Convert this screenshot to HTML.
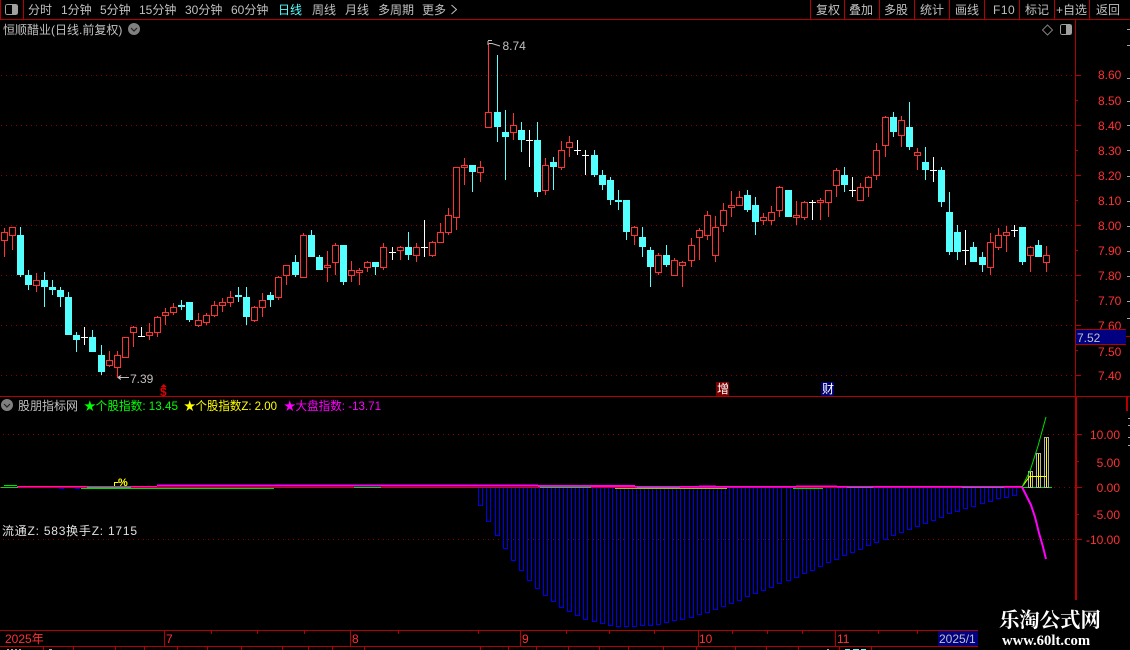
<!DOCTYPE html>
<html lang="zh">
<head>
<meta charset="utf-8">
<title>恒顺醋业</title>
<style>
html,body{margin:0;padding:0;background:#000;width:1130px;height:650px;overflow:hidden}
svg{display:block;position:absolute;left:0;top:0}
text{font-family:"Liberation Sans","WenQuanYi Zen Hei","Noto Sans CJK SC",sans-serif;font-size:12px}
.g{fill:#c0c0c0}
.r{fill:#ff3232}
.end{text-anchor:end}
</style>
</head>
<body>
<svg id="s" width="1130" height="650" viewBox="0 0 1130 650" xmlns="http://www.w3.org/2000/svg" shape-rendering="crispEdges">
<rect width="1130" height="650" fill="#000"/>
<!-- grid -->
<g stroke="#8c0000" stroke-dasharray="1 4" fill="none">
<path d="M1 75.5H1075M1 125.5H1075M1 175.5H1075M1 225.5H1075M1 275.5H1075M1 325.5H1075M1 375.5H1075"/>
<path d="M3 434.5H1075M3 539.5H1075M1024 487.5H1075"/>
</g>
<!-- frame -->
<g stroke="#b40000" fill="none">
<path d="M0 19.5H1130M23.5 0V19M0.5 0V19"/>
<path d="M810.5 0V19M844.5 0V19M879.5 0V19M914.5 0V19M949.5 0V19M984.5 0V19M1019.5 0V19M1054.5 0V19M1089.5 0V19"/>
<path d="M1075.5 19V397M0 396.5H1130"/>
<path d="M1075.5 397V600M1076.5 397V600"/>
<path d="M1075 75.5h6M1075 100.5h3M1075 125.5h6M1075 150.5h3M1075 175.5h6M1075 200.5h3M1075 225.5h6M1075 250.5h3M1075 275.5h6M1075 300.5h3M1075 325.5h6M1075 350.5h3M1075 375.5h6"/>
<path d="M1076 434.5h6M1076 461.5h3M1076 487.5h6M1076 514.5h3M1076 539.5h6"/>
<path d="M0 630.5H978M0 646.5H978"/>
<path d="M164.5 630V646M350.5 630V646M520.5 630V646M698.5 630V646M835.5 630V646"/>
<path d="M211.5 631v3M257.5 631v3M304.5 631v3M398.5 631v3M478.5 631v3M566.5 631v3M609.5 631v3M654.5 631v3M732.5 631v3M767.5 631v3M802.5 631v3M878.5 631v3M917.5 631v3"/>
<path d="M43.5 646v4M73.5 646v4M115.5 646v4M144.5 646v4M177.5 646v4M207.5 646v4M241.5 646v4M282.5 646v4M308.5 646v4M332.5 646v4M364.5 646v4M480.5 646v4M508.5 646v4M536.5 646v4M568.5 646v4M599.5 646v4M628.5 646v4M663.5 646v4M696.5 646v4M735.5 646v4M766.5 646v4M798.5 646v4M839.5 646v4M871.5 646v4"/>
<path d="M1126.5 397V411M1127.5 397V411"/>
</g>
<g stroke="#a8a8a8" fill="none"><path d="M1127 29.5h3M1127 45.5h3M1127 78.5h3M1127 101.5h3M1127 125.5h3M1127 150.5h3M1127 176.5h3M1127 201.5h3M1127 226.5h3M1127 251.5h3M1127 276.5h3M1127 301.5h3M1127 318.5h3M1128 418.5h2M1128 425.5h2M1128 437.5h2M1128 445.5h2"/>
<path d="M7 649.5h2M11 649.5h2M15 649.5h2M19 649.5h2M49 649.5h3M827 649.5h2"/></g>
<path d="M845 649.5h5M853 649.5h6M861 649.5h5" stroke="#54ffff" fill="none"/>
<!-- toolbar -->
<g fill="none" stroke="#a0a0a0"><rect x="5.5" y="4.5" width="12" height="10" rx="2"/></g><rect x="12" y="5" width="5" height="9" fill="#a0a0a0"/>
<text class="g" x="28" y="14">分时</text>
<text class="g" x="61" y="14">1分钟</text>
<text class="g" x="100" y="14">5分钟</text>
<text class="g" x="139" y="14">15分钟</text>
<text class="g" x="185" y="14">30分钟</text>
<text class="g" x="231" y="14">60分钟</text>
<text x="278" y="14" fill="#54ffff">日线</text>
<text class="g" x="312" y="14">周线</text>
<text class="g" x="345" y="14">月线</text>
<text class="g" x="378" y="14">多周期</text>
<text class="g" x="422" y="14">更多</text>
<path d="M451.5 5l5 4.5-5 4.5" fill="none" stroke="#c0c0c0" shape-rendering="auto"/>
<text class="g" x="816" y="14">复权</text>
<text class="g" x="849" y="14">叠加</text>
<text class="g" x="884" y="14">多股</text>
<text class="g" x="920" y="14">统计</text>
<text class="g" x="955" y="14">画线</text>
<text class="g" x="993" y="14" style="letter-spacing:.5px">F10</text>
<text class="g" x="1025" y="14">标记</text>
<text class="g" x="1056" y="14">+自选</text>
<text class="g" x="1096" y="14">返回</text>
<!-- title -->
<text class="g" x="3" y="34">恒顺醋业(日线.前复权)</text>
<g shape-rendering="auto">
<circle cx="134" cy="29" r="6" fill="#808080"/><path d="M131 28l3 3 3-3" fill="none" stroke="#222" stroke-width="1.2"/>
<path d="M1047.5 25l5 5-5 5-5-5z" fill="none" stroke="#808080"/>
<circle cx="7" cy="405" r="6" fill="#808080"/><path d="M4 404l3 3 3-3" fill="none" stroke="#222" stroke-width="1.2"/>
</g>
<rect x="1060.5" y="24.5" width="11" height="10" rx="2" fill="none" stroke="#a0a0a0"/><rect x="1066" y="25" width="5" height="9" fill="#a0a0a0"/>
<g id="bars" fill="none" stroke="#0000f0"></g>
<g id="candles"></g>
<!-- price labels -->
<g class="r" fill="#ff3232">
<text x="1098" y="79">8.60</text>
<text x="1098" y="105">8.50</text>
<text x="1098" y="130">8.40</text>
<text x="1098" y="155">8.30</text>
<text x="1098" y="180">8.20</text>
<text x="1098" y="205">8.10</text>
<text x="1098" y="230">8.00</text>
<text x="1098" y="255">7.90</text>
<text x="1098" y="280">7.80</text>
<text x="1098" y="305">7.70</text>
<text x="1098" y="330">7.60</text>
<text x="1098" y="356">7.50</text>
<text x="1098" y="380">7.40</text>
<text class="end" x="1120" y="439">10.00</text>
<text class="end" x="1120" y="467">5.00</text>
<text class="end" x="1120" y="492">0.00</text>
<text class="end" x="1120" y="519">-5.00</text>
<text class="end" x="1120" y="544">-10.00</text>
<text x="5" y="643">2025年</text>
<text x="166" y="643">7</text>
<text x="352" y="643">8</text>
<text x="522" y="643">9</text>
<text x="699" y="643">10</text>
<text x="837" y="643">11</text>
</g>
<!-- current price -->
<rect x="1076" y="329" width="50" height="16" fill="#000080"/>
<path d="M1076 329.5h50M1076 344.5h50M1126 336.5h4" stroke="#b40000" fill="none"/>
<text x="1077" y="342" class="g">7.52</text>
<!-- date label -->
<rect x="938" y="631" width="40" height="15" fill="#000080"/>
<text x="939" y="643" class="g">2025/1</text>
<!-- hi/lo -->
<g fill="none" stroke="#c0c0c0"><path d="M118 377.5h11M118 377.5l3-2M118 377.5l3 2"/><path d="M488 40.5h4M488 41v4M489 43.5h3l8 2.5" shape-rendering="auto"/></g>
<text class="g" x="130" y="383">7.39</text>
<text class="g" x="502.5" y="50">8.74</text>
<!-- markers -->
<path d="M163.5 384l3 3h-6z" fill="#e00000"/>
<text x="160" y="396" fill="#e00000" style="font-weight:bold;font-size:12px">$</text>
<rect x="716" y="382" width="13" height="14" fill="#7a0000"/>
<text x="717" y="393" fill="#fff">增</text>
<rect x="821" y="382" width="13" height="14" fill="#000070"/>
<text x="822" y="393" fill="#fff">财</text>
<!-- sub title -->
<text class="g" x="18" y="410">股朋指标网</text>
<text x="84" y="410" fill="#00ff00" textLength="94" lengthAdjust="spacingAndGlyphs">★个股指数: 13.45</text>
<text x="184" y="410" fill="#ffff00" textLength="93" lengthAdjust="spacingAndGlyphs">★个股指数Z: 2.00</text>
<text x="284" y="410" fill="#ff00ff" textLength="97" lengthAdjust="spacingAndGlyphs">★大盘指数: -13.71</text>
<text x="2" y="535" fill="#e0e0e0" textLength="135" lengthAdjust="spacing">流通Z: 583换手Z: 1715</text>
<!-- percent marker -->
<text x="118" y="486" fill="#ffff00" style="font-size:11px;font-weight:bold">%</text>
<path d="M114.5 486v-3.5h4" fill="none" stroke="#ffff00"/>
<!-- zero lines -->
<g fill="none">
<path d="M0 487.5H1022" stroke="#e00000"/>
<path d="M4 485.5h13M1 487.5h17M81 488.5h193M87 487.5h44M354 487.5h27M540 487.5h51M637 487.5h43M793 488.5h30M847 487.5h26M941 486.5h21M962 487.5h42M1023 487.5h29" stroke="#00e000"/>
<path d="M615 488.5h112" stroke="#a0c000"/>
<path d="M59 488.5h5M75 488.5h5" stroke="#0000f0"/>
<path d="M17 486.5H157M750 486.5H1022" stroke="#ff00ff" stroke-width="1"/>
<path d="M157 485.5H538M538 486H635" stroke="#ff00ff" stroke-width="2"/>
<path d="M635 486.5H796M699 486h17M796 486h41M837 486.5H1022" stroke="#ff00ff" stroke-width="1.5"/>
</g>
<!-- right bars -->
<g fill="none" stroke="#b0b0b0">
<rect x="1028.5" y="471.5" width="4" height="16"/>
<rect x="1036.5" y="453.5" width="4" height="34"/>
<rect x="1044.5" y="437.5" width="4" height="50"/>
</g>
<g fill="none" stroke="#ffff00">
<path d="M1030.5 472V487M1038.5 454V487M1046.5 438V487M1030 476.5h17"/>
<path d="M1022 487L1030 476" shape-rendering="auto"/>
</g>
<g fill="none" shape-rendering="auto">
<path d="M1022 487L1030 471L1038 446L1046 417" stroke="#00e000"/>
<path d="M1022 487L1027 497L1031 505L1035 517L1039 533L1043 547L1046 559" stroke="#ff00ff" stroke-width="2"/>
</g>
<!-- watermark -->
<rect x="978" y="600" width="152" height="50" fill="#000"/>
<text x="999" y="627" fill="#fff" style="font-family:'Noto Serif CJK SC','Liberation Serif',serif;font-weight:bold;font-size:20.4px">乐淘公式网</text>
<text x="1002" y="645" fill="#fff" style="font-family:'Liberation Serif',serif;font-weight:bold;font-size:14.7px">www.60lt.com</text>
</svg>
<script>
var D=[[4,0,228,232,241,257],[12,0,227,227,236,250],[20,1,227,235,275,277],[28,1,270,275,285,290],[36,0,273,280,286,292],[44,1,272,280,287,307],[52,1,280,287,290,295],[60,1,287,290,297,307],[68,1,292,297,335,335],[76,1,332,335,340,352],[84,2,327,337,337,345],[92,1,330,337,352,352],[101,1,345,355,372,375],[109,0,351,360,366,367],[117,0,351,355,368,378],[125,0,337,337,358,358],[133,0,326,327,333,347],[141,2,327,336,336,337],[149,0,323,332,336,340],[157,0,316,317,333,337],[165,0,308,312,316,325],[173,0,303,307,313,315],[181,1,300,305,307,310],[189,1,302,302,320,322],[198,0,313,320,326,327],[206,0,313,315,323,325],[214,0,301,305,316,317],[222,0,298,302,306,312],[230,0,291,297,303,307],[238,1,287,295,297,302],[246,1,287,297,317,325],[254,0,306,307,321,322],[262,0,293,300,308,317],[270,1,292,295,300,307],[278,0,276,277,298,300],
[286,0,265,265,276,285],[295,1,255,262,275,277],[303,0,233,235,278,278],[311,1,230,235,257,257],[319,1,255,257,270,270],[327,0,251,265,268,282],[335,0,243,245,263,275],[343,1,245,245,282,285],[351,0,261,270,276,282],[359,0,268,270,273,285],[367,0,261,262,268,272],[375,1,262,262,267,275],[383,0,243,247,268,270],[392,2,247,252,252,260],[400,0,246,247,251,260],[408,1,232,247,255,260],[416,0,243,247,256,262],[424,2,220,247,247,257],[432,0,241,242,256,257],[440,0,223,232,243,243],[448,0,208,215,233,235],[456,0,167,167,218,230],[464,0,158,165,168,185],[472,1,165,165,172,192],[480,0,161,167,173,182],
[488,0,43,112,128,128],[497,1,55,112,127,142],[505,1,110,132,137,180],[513,0,113,125,133,140],[521,1,122,130,140,152],[529,2,130,140,140,167],[537,1,122,140,192,197],[545,0,158,165,191,195],[553,1,157,162,167,190],[561,0,141,150,168,170],[569,0,136,142,148,157],[577,2,140,150,150,155],[585,2,150,155,155,175],[594,1,150,155,175,177],[602,1,170,175,185,190],[610,1,177,180,200,205],[618,1,190,200,202,210],[626,1,200,200,232,240],[634,0,226,227,236,245],[642,1,227,237,247,257],[650,1,247,250,267,287],[658,0,253,255,273,275],[666,1,245,255,265,267],[674,0,258,260,276,276],[682,0,261,262,266,287],[691,0,238,245,261,267],[699,0,228,230,238,260],[707,0,211,215,236,240],[715,0,216,227,256,262],[723,0,203,210,226,232],[731,0,191,205,208,217],[739,0,191,197,206,206],[747,1,190,195,210,212],[755,1,197,205,222,235],
[763,0,213,217,221,225],[771,0,206,212,221,225],[779,0,186,187,211,217],[788,1,190,190,217,217],[796,0,201,215,218,225],[804,0,201,202,218,220],[812,2,200,202,202,220],[820,0,198,200,203,220],[828,0,190,190,203,217],[836,0,168,170,186,197],[844,1,167,175,185,192],[852,2,177,190,190,197],[860,0,183,187,201,201],[868,0,176,177,188,197],[876,0,143,150,176,180],[885,0,116,117,146,157],[893,1,112,117,132,137],[901,0,116,120,136,147],[909,1,102,127,147,150],[917,0,148,152,156,170],[925,1,147,162,170,180],[933,2,157,170,170,182],[941,1,167,170,202,207],[949,1,192,212,252,255],[957,1,225,232,252,260],[965,2,230,250,250,265],[973,1,242,247,262,262],[982,1,252,257,265,272],[990,0,233,242,268,275],[998,0,228,235,248,250],[1006,0,226,232,236,252],[1014,2,225,230,230,237],[1022,1,227,227,262,265],[1030,0,246,247,256,272],[1038,1,240,245,257,257],[1046,0,246,255,263,272]];
var B=[505,521,535,548,560,570,580,588,595,601,607,611,615,619,621,623,625,626,626,626,625,625,624,622,620,619,617,614,612,609,606,603,600,596,593,590,587,583,580,577,573,570,566,562,559,555,552,549,545,542,539,535,532,529,526,523,520,517,513,511,508,506,503,501,498,497,495];
var R="#ff3232",C="#54ffff",W="#ffffff",c="",b="";
D.forEach(function(d){var x=d[0],t=d[1],h=d[2],a=d[3],e=d[4],l=d[5],w=x+.5;
if(t==0){
 if(h<a)c+='<path d="M'+w+' '+h+'V'+a+'" stroke="'+R+'"/>';
 if(l>e)c+='<path d="M'+w+' '+e+'V'+l+'" stroke="'+R+'"/>';
 c+='<rect x="'+(x-3+.5)+'" y="'+(a+.5)+'" width="6" height="'+Math.max(e-a-1,1)+'" fill="#000" stroke="'+R+'"/>';
}else if(t==1){
 if(l>h)c+='<path d="M'+w+' '+h+'V'+l+'" stroke="'+C+'"/>';
 c+='<rect x="'+(x-3)+'" y="'+a+'" width="7" height="'+(e-a)+'" fill="'+C+'"/>';
}else{
 c+='<path d="M'+w+' '+h+'V'+l+'M'+(x-3)+' '+(a+.5)+'h7" stroke="'+W+'"/>';
}});
B.forEach(function(y,i){var x=D[59+i][0];
 b+='<path d="M'+(x-2+.5)+' 488V'+(y+.5)+'H'+(x+2+.5)+'V488"/>';});
document.getElementById("candles").innerHTML=c;
document.getElementById("bars").innerHTML=b;
</script>
</body>
</html>
